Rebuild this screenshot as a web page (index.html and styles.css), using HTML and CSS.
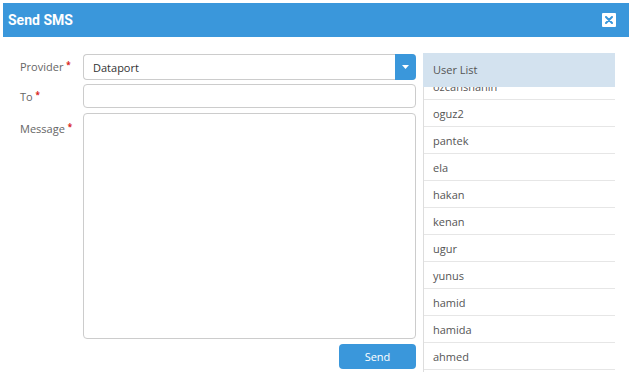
FILE: index.html
```html
<!DOCTYPE html>
<html lang="en">
<head>
  <meta charset="UTF-8">
  <meta name="viewport" content="width=device-width, initial-scale=1.0">
  <title>Send SMS</title>
  <link rel="stylesheet" href="styles.css">
</head>
<body>
  <div class="modal">
    <div class="modal-header">
      <h2 class="modal-title">Send SMS</h2>
      <button class="close-btn" type="button" aria-label="Close">
        <svg width="8" height="8" viewBox="0 0 8 8">
          <path d="M1 1 L7 7 M7 1 L1 7" stroke="#3a97db" stroke-width="2" stroke-linecap="round" />
        </svg>
      </button>
    </div>

    <div class="modal-body">
      <form class="sms-form">
        <label class="field-label" for="provider">Provider <span class="req">*</span></label>
        <div class="select-box">
          <span class="select-value" id="provider">Dataport</span>
          <span class="select-arrow">
            <svg width="7" height="4" viewBox="0 0 7 4"><path d="M0 0 H7 L3.5 4 Z" fill="#fff" /></svg>
          </span>
        </div>

        <label class="field-label" for="to">To <span class="req">*</span></label>
        <input class="text-input" type="text" id="to">

        <label class="field-label field-label--tall" for="message">Message <span class="req">*</span></label>
        <textarea class="text-area" id="message"></textarea>

        <span></span>
        <div class="form-actions">
          <button class="send-btn" type="button">Send</button>
        </div>
      </form>

      <div class="user-list">
        <div class="user-list-header">User List</div>
        <div class="user-list-body">
          <ul class="user-rows">
            <li>ozcanshahin</li>
            <li>oguz2</li>
            <li>pantek</li>
            <li>ela</li>
            <li>hakan</li>
            <li>kenan</li>
            <li>ugur</li>
            <li>yunus</li>
            <li>hamid</li>
            <li>hamida</li>
            <li>ahmed</li>
          </ul>
        </div>
      </div>
    </div>
  </div>
</body>
</html>
```

FILE: styles.css
```css
body {
  margin: 0;
  font-family: "Open Sans", "DejaVu Sans", sans-serif;
  background-color: #fff;
  color: #555;
}
.modal {
  padding: 3px;
}
.modal-header {
  height: 34px;
  background-color: #3a97db;
  display: flex;
  align-items: center;
  justify-content: space-between;
  padding: 0 13px 0 5px;
}
.modal-title {
  margin: 0;
  font-family: Roboto, "Liberation Sans", sans-serif;
  font-size: 14px;
  font-weight: bold;
  color: #fff;
}
.close-btn {
  width: 14px;
  height: 14px;
  padding: 0;
  border: none;
  border-radius: 1px;
  background-color: #fff;
  display: flex;
  align-items: center;
  justify-content: center;
}
.modal-body {
  display: flex;
  align-items: flex-start;
  gap: 7px;
  padding: 16px 0 0 17px;
}
.sms-form {
  display: grid;
  grid-template-columns: 63px 333px;
  row-gap: 4px;
  margin-top: 1px;
}
.field-label {
  font-size: 11px;
  line-height: 16px;
  padding-top: 5px;
  color: #666;
}
.field-label--tall {
  padding-top: 8px;
}
.req {
  color: #d9251d;
  font-size: 8px;
  font-weight: bold;
  vertical-align: top;
  line-height: 12px;
}
.select-box {
  height: 26px;
  box-sizing: border-box;
  border: 1px solid #ccc;
  border-right: none;
  border-radius: 4px;
  display: flex;
  align-items: center;
  justify-content: space-between;
}
.select-value {
  padding-left: 9px;
  font-size: 11px;
  color: #333;
}
.select-arrow {
  width: 21px;
  height: 26px;
  margin-top: -1px;
  margin-bottom: -1px;
  background-color: #3a97db;
  border-radius: 0 4px 4px 0;
  display: flex;
  align-items: center;
  justify-content: center;
}
.text-input {
  height: 24px;
  box-sizing: border-box;
  border: 1px solid #ccc;
  border-radius: 4px;
  margin: 0 0 1px;
}
.text-area {
  height: 226px;
  box-sizing: border-box;
  border: 1px solid #ccc;
  border-radius: 4px;
  resize: none;
  margin: 0;
}
.form-actions {
  display: flex;
  justify-content: flex-end;
  padding-top: 1px;
}
.send-btn {
  width: 77px;
  height: 25px;
  border: none;
  border-radius: 4px;
  background-color: #3a97db;
  color: #fff;
  font-family: "Open Sans", sans-serif;
  font-size: 11px;
}
.user-list {
  width: 192px;
}
.user-list-header {
  height: 34px;
  line-height: 34px;
  padding-left: 10px;
  background-color: #d3e2ef;
  font-size: 11px;
  color: #555;
}
.user-list-body {
  height: 285px;
  overflow: hidden;
  border-left: 1px solid #ddd;
}
.user-rows {
  list-style: none;
  margin: -14px 0 0;
  padding: 0;
}
.user-rows li {
  height: 25px;
  line-height: 26px;
  padding: 1px 0 0 9px;
  border-bottom: 1px solid #e6e6e6;
  font-size: 11px;
  color: #555;
}
```
